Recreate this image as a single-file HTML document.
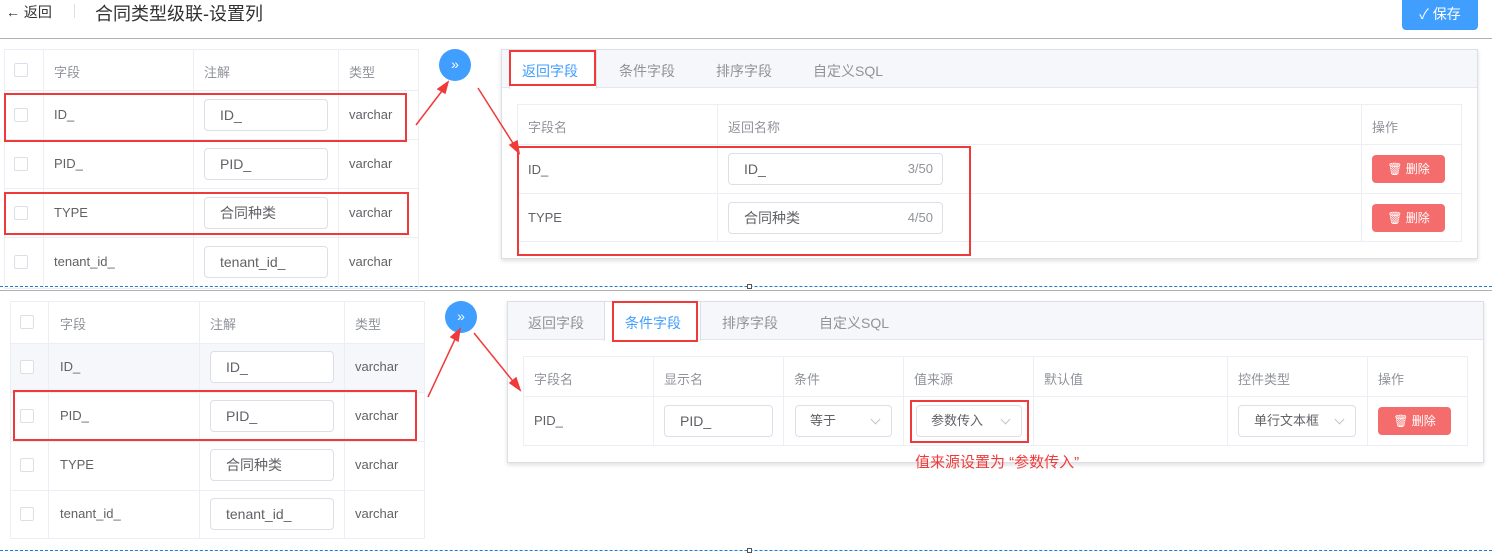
<!DOCTYPE html><html><head><meta charset="utf-8"><style>
*{box-sizing:border-box;margin:0;padding:0}
body{width:1492px;height:556px;background:#fff;position:relative;overflow:hidden;font-family:"Liberation Sans","Noto Sans CJK SC",sans-serif;font-size:13px;color:#606266}
.a{position:absolute}
.bd{border:1px solid #ebeef5}
.vl{position:absolute;width:1px;background:#ebeef5}
.hl{position:absolute;height:1px;background:#ebeef5}
.cb{position:absolute;width:14px;height:14px;border:1px solid #dcdfe6;border-radius:2px;background:#fff}
.in{position:absolute;border:1px solid #dcdfe6;border-radius:4px;background:#fff;height:32px;line-height:30px;padding-left:15px;font-size:14px;color:#606266}
.th{position:absolute;color:#909399;font-size:13px}
.t{position:absolute;font-size:13px;color:#606266}
.red{position:absolute;border:2px solid #f03a3a}
.circ{position:absolute;width:32px;height:32px;border-radius:50%;background:#409eff;color:#fff;text-align:center;line-height:30px;font-size:14px}
.del{position:absolute;width:73px;height:28px;background:#f56c6c;border-radius:4px;color:#fff;font-size:12px;line-height:28px;text-align:center}
.tab{position:absolute;font-size:14px;color:#909399}
.sel:after{content:"";position:absolute;right:12px;top:10px;width:6px;height:6px;border-right:1px solid #c0c4cc;border-bottom:1px solid #c0c4cc;transform:rotate(45deg)}
</style></head><body>
<!-- header -->
<div class="a" style="left:6px;top:2px;font-size:14px;color:#303133">← 返回</div>
<div class="a" style="left:74px;top:4px;width:1px;height:14px;background:#dcdfe6"></div>
<div class="a" style="left:95px;top:0px;font-size:18px;color:#303133">合同类型级联-设置列</div>
<div class="a" style="left:1402px;top:0;width:76px;height:30px;background:#409eff;border-radius:0 0 4px 4px;color:#fff;font-size:14px;line-height:28px;text-align:center">✓ 保存</div>
<div class="a" style="left:0;top:38px;width:1492px;height:1px;background:#b0b0b0"></div>

<!-- top left table -->
<div class="a bd" style="left:4px;top:49px;width:415px;height:240px"></div>
<div class="vl" style="left:43px;top:49px;height:240px"></div>
<div class="vl" style="left:193px;top:49px;height:240px"></div>
<div class="vl" style="left:338px;top:49px;height:240px"></div>
<div class="hl" style="left:4px;top:90px;width:415px"></div>
<div class="hl" style="left:4px;top:139px;width:415px"></div>
<div class="hl" style="left:4px;top:188px;width:415px"></div>
<div class="hl" style="left:4px;top:237px;width:415px"></div>
<div class="cb" style="left:14px;top:63px"></div>
<div class="th" style="left:54px;top:62px">字段</div><div class="th" style="left:204px;top:62px">注解</div><div class="th" style="left:349px;top:62px">类型</div>
<div class="cb" style="left:14px;top:108px"></div><div class="t" style="left:54px;top:107px">ID_</div><div class="in" style="left:204px;top:99px;width:124px">ID_</div><div class="t" style="left:349px;top:107px">varchar</div>
<div class="cb" style="left:14px;top:157px"></div><div class="t" style="left:54px;top:156px">PID_</div><div class="in" style="left:204px;top:148px;width:124px">PID_</div><div class="t" style="left:349px;top:156px">varchar</div>
<div class="cb" style="left:14px;top:206px"></div><div class="t" style="left:54px;top:205px">TYPE</div><div class="in" style="left:204px;top:197px;width:124px">合同种类</div><div class="t" style="left:349px;top:205px">varchar</div>
<div class="cb" style="left:14px;top:255px"></div><div class="t" style="left:54px;top:254px">tenant_id_</div><div class="in" style="left:204px;top:246px;width:124px">tenant_id_</div><div class="t" style="left:349px;top:254px">varchar</div>
<div class="circ" style="left:439px;top:49px">»</div>

<!-- top right panel -->
<div class="a" style="left:501px;top:49px;width:977px;height:210px;border:1px solid #dcdfe6;box-shadow:0 2px 4px rgba(0,0,0,.12)"></div>
<div class="a" style="left:502px;top:50px;width:975px;height:38px;background:#f5f7fa;border-bottom:1px solid #e4e7ed"></div>
<div class="a" style="left:509px;top:50px;width:88px;height:39px;background:#fff;border-left:1px solid #dcdfe6;border-right:1px solid #dcdfe6"></div>
<div class="tab" style="left:522px;top:61px;color:#409eff">返回字段</div><div class="tab" style="left:619px;top:61px">条件字段</div><div class="tab" style="left:716px;top:61px">排序字段</div><div class="tab" style="left:813px;top:61px">自定义SQL</div>
<div class="a bd" style="left:517px;top:104px;width:945px;height:138px"></div>
<div class="vl" style="left:717px;top:104px;height:138px"></div><div class="vl" style="left:1361px;top:104px;height:138px"></div>
<div class="hl" style="left:517px;top:144px;width:945px"></div><div class="hl" style="left:517px;top:193px;width:945px"></div>
<div class="th" style="left:528px;top:117px">字段名</div><div class="th" style="left:728px;top:117px">返回名称</div><div class="th" style="left:1372px;top:117px">操作</div>
<div class="t" style="left:528px;top:162px">ID_</div><div class="in" style="left:728px;top:153px;width:215px">ID_<span style="position:absolute;right:9px;color:#909399;font-size:13px">3/50</span></div><div class="del" style="left:1372px;top:155px">🗑 删除</div>
<div class="t" style="left:528px;top:210px">TYPE</div><div class="in" style="left:728px;top:202px;width:215px">合同种类<span style="position:absolute;right:9px;color:#909399;font-size:13px">4/50</span></div><div class="del" style="left:1372px;top:204px">🗑 删除</div>

<!-- divider -->
<div class="a" style="left:0;top:286px;width:1492px;border-top:1px dashed #1f7bd0"></div>
<div class="a" style="left:747px;top:284px;width:5px;height:5px;border:1px solid #555;background:#fff"></div>
<div class="a" style="left:0;top:290px;width:1492px;height:1px;background:#b0b0b0"></div>

<!-- bottom left table -->
<div class="a bd" style="left:10px;top:301px;width:415px;height:238px"></div>
<div class="a" style="left:11px;top:343px;width:413px;height:49px;background:#f5f7fa"></div>
<div class="vl" style="left:48px;top:301px;height:238px"></div><div class="vl" style="left:199px;top:301px;height:238px"></div><div class="vl" style="left:344px;top:301px;height:238px"></div>
<div class="hl" style="left:10px;top:343px;width:415px"></div><div class="hl" style="left:10px;top:392px;width:415px"></div><div class="hl" style="left:10px;top:441px;width:415px"></div><div class="hl" style="left:10px;top:490px;width:415px"></div>
<div class="cb" style="left:20px;top:315px"></div><div class="th" style="left:60px;top:314px">字段</div><div class="th" style="left:210px;top:314px">注解</div><div class="th" style="left:355px;top:314px">类型</div>
<div class="cb" style="left:20px;top:360px"></div><div class="t" style="left:60px;top:359px">ID_</div><div class="in" style="left:210px;top:351px;width:124px">ID_</div><div class="t" style="left:355px;top:359px">varchar</div>
<div class="cb" style="left:20px;top:409px"></div><div class="t" style="left:60px;top:408px">PID_</div><div class="in" style="left:210px;top:400px;width:124px">PID_</div><div class="t" style="left:355px;top:408px">varchar</div>
<div class="cb" style="left:20px;top:458px"></div><div class="t" style="left:60px;top:457px">TYPE</div><div class="in" style="left:210px;top:449px;width:124px">合同种类</div><div class="t" style="left:355px;top:457px">varchar</div>
<div class="cb" style="left:20px;top:507px"></div><div class="t" style="left:60px;top:506px">tenant_id_</div><div class="in" style="left:210px;top:498px;width:124px">tenant_id_</div><div class="t" style="left:355px;top:506px">varchar</div>
<div class="circ" style="left:445px;top:301px">»</div>

<!-- bottom right panel -->
<div class="a" style="left:507px;top:301px;width:977px;height:162px;border:1px solid #dcdfe6;box-shadow:0 2px 4px rgba(0,0,0,.12)"></div>
<div class="a" style="left:508px;top:302px;width:975px;height:38px;background:#f5f7fa;border-bottom:1px solid #e4e7ed"></div>
<div class="a" style="left:604px;top:302px;width:97px;height:39px;background:#fff;border-left:1px solid #dcdfe6;border-right:1px solid #dcdfe6"></div>
<div class="tab" style="left:528px;top:313px">返回字段</div><div class="tab" style="left:625px;top:313px;color:#409eff">条件字段</div><div class="tab" style="left:722px;top:313px">排序字段</div><div class="tab" style="left:819px;top:313px">自定义SQL</div>
<div class="a bd" style="left:523px;top:356px;width:945px;height:90px"></div>
<div class="vl" style="left:653px;top:356px;height:90px"></div><div class="vl" style="left:783px;top:356px;height:90px"></div><div class="vl" style="left:903px;top:356px;height:90px"></div><div class="vl" style="left:1033px;top:356px;height:90px"></div><div class="vl" style="left:1227px;top:356px;height:90px"></div><div class="vl" style="left:1367px;top:356px;height:90px"></div>
<div class="hl" style="left:523px;top:396px;width:945px"></div>
<div class="th" style="left:534px;top:369px">字段名</div><div class="th" style="left:664px;top:369px">显示名</div><div class="th" style="left:794px;top:369px">条件</div><div class="th" style="left:914px;top:369px">值来源</div><div class="th" style="left:1044px;top:369px">默认值</div><div class="th" style="left:1238px;top:369px">控件类型</div><div class="th" style="left:1378px;top:369px">操作</div>
<div class="t" style="left:534px;top:413px">PID_</div>
<div class="in" style="left:664px;top:405px;width:109px">PID_</div>
<div class="in sel" style="left:795px;top:405px;width:97px;font-size:13px;padding-left:14px">等于</div>
<div class="in sel" style="left:916px;top:405px;width:106px;font-size:13px;padding-left:14px">参数传入</div>
<div class="in sel" style="left:1238px;top:405px;width:118px;font-size:13px;padding-left:15px">单行文本框</div>
<div class="del" style="left:1378px;top:407px">🗑 删除</div>

<div class="a" style="left:0;top:550px;width:1492px;border-top:1px dashed #1f7bd0"></div>
<div class="a" style="left:747px;top:548px;width:5px;height:5px;border:1px solid #555;background:#fff"></div>

<!-- red annotations -->
<div class="red" style="left:4px;top:93px;width:403px;height:49px"></div>
<div class="red" style="left:4px;top:192px;width:405px;height:43px"></div>
<div class="red" style="left:509px;top:50px;width:87px;height:36px"></div>
<div class="red" style="left:517px;top:146px;width:454px;height:110px"></div>
<div class="red" style="left:13px;top:390px;width:404px;height:51px"></div>
<div class="red" style="left:612px;top:301px;width:86px;height:41px"></div>
<div class="red" style="left:910px;top:400px;width:119px;height:43px"></div>
<div class="a" style="left:915px;top:451px;font-size:15px;color:#f03a3a">值来源设置为 “参数传入”</div>
<svg class="a" style="left:0;top:0" width="1492" height="556"><g stroke="#f03a3a" stroke-width="1.5" fill="#f03a3a">
<line x1="416" y1="125" x2="445" y2="87"/><polygon points="448,82 438,89 445,93"/>
<line x1="478" y1="88" x2="516" y2="148"/><polygon points="519,153 510,145 517,141"/>
<line x1="428" y1="397" x2="457" y2="335"/><polygon points="460,329 451,337 458,341"/>
<line x1="474" y1="333" x2="516" y2="385"/><polygon points="520,390 510,383 516,378"/>
</g></svg>
</body></html>
